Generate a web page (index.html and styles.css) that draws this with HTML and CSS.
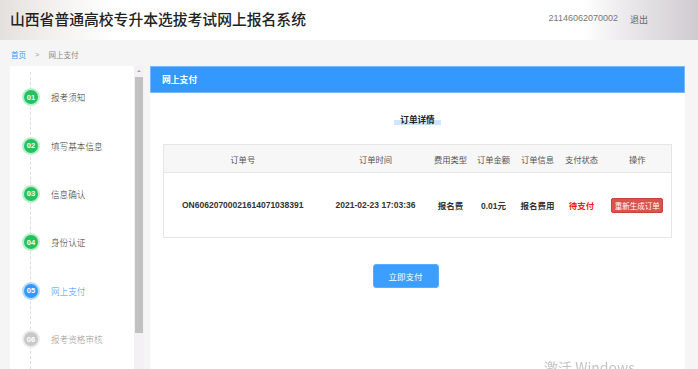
FILE: index.html
```html
<!DOCTYPE html>
<html lang="zh-CN">
<head>
<meta charset="utf-8">
<title>山西省普通高校专升本选拔考试网上报名系统</title>
<link rel="stylesheet" href="styles.css">
</head>
<body>
<header class="header">
  <h1 class="title">山西省普通高校专升本选拔考试网上报名系统</h1>
  <div class="user"><span class="uid">21146062070002</span><a class="logout">退出</a></div>
</header>
<nav class="crumb"><a class="crumb-home">首页</a><span class="crumb-sep">&gt;</span><span class="crumb-cur">网上支付</span></nav>
<div class="layout">
  <aside class="sidebar">
    <ul class="steps">
      <li class="step done"><span class="dot">01</span><span class="label">报考须知</span></li>
      <li class="step done"><span class="dot">02</span><span class="label">填写基本信息</span></li>
      <li class="step done"><span class="dot">03</span><span class="label">信息确认</span></li>
      <li class="step done"><span class="dot">04</span><span class="label">身份认证</span></li>
      <li class="step active"><span class="dot">05</span><span class="label">网上支付</span></li>
      <li class="step todo"><span class="dot">06</span><span class="label">报考资格审核</span></li>
    </ul>
    <div class="scrollbar"><span class="arrow"></span><span class="thumb"></span></div>
  </aside>
  <main class="main">
    <div class="panel-head">网上支付</div>
    <div class="panel-body">
      <h2 class="sub-title"><span>订单详情</span></h2>
      <table class="orders">
        <colgroup><col class="c1"><col class="c2"><col class="c3"><col class="c4"><col class="c5"><col class="c6"><col class="c7"></colgroup>
        <thead>
          <tr><th>订单号</th><th>订单时间</th><th>费用类型</th><th>订单金额</th><th>订单信息</th><th>支付状态</th><th>操作</th></tr>
        </thead>
        <tbody>
          <tr><td>ON60620700021614071038391</td><td>2021-02-23 17:03:36</td><td>报名费</td><td>0.01元</td><td>报名费用</td><td class="unpaid">待支付</td><td><button class="btn-regen">重新生成订单</button></td></tr>
        </tbody>
      </table>
      <div class="pay-wrap"><button class="btn-pay">立即支付</button></div>
    </div>
  </main>
</div>
<div class="watermark">激活 Windows</div>
</body>
</html>
```
FILE: styles.css
```css
* { box-sizing: border-box; }
html, body { margin: 0; padding: 0; }
body {
  background: #f5f5f5;
  font-family: "Liberation Sans", "Noto Sans CJK SC", sans-serif;
  color: #333;
  height: 369px;
  overflow: hidden;
}
.header {
  height: 40px;
  display: flex;
  align-items: center;
  justify-content: space-between;
  padding: 0 50px 4px 10px;
  background:
    linear-gradient(90deg, rgba(196,186,180,.45) 0, rgba(220,214,210,.3) 60px, rgba(255,255,255,0) 115px),
    linear-gradient(90deg, #fff 0, #fff 585px, #eeecee 620px, #cfcbd0 698px);
}
.title {
  margin: 0;
  font-size: 14.8px;
  font-weight: 500;
  color: #222;
  font-family: "Noto Sans CJK SC", sans-serif;
}
.user { font-size: 9px; color: #777; display: flex; gap: 12px; margin-top: 2px; }
.logout { color: #666; }
.crumb {
  height: 26px;
  display: flex;
  align-items: center;
  padding-left: 11px;
  padding-top: 2px;
  font-size: 7.5px;
  color: #888;
}
.crumb-home { color: #3399ff; }
.crumb-sep { margin: 0 9px 0 9px; color: #999; }
.layout {
  display: flex;
  gap: 6px;
  padding: 0 14px 0 10px;
  height: 303px;
}
.sidebar {
  width: 134px;
  background: #fff;
  display: flex;
  flex: none;
}
.steps {
  list-style: none;
  margin: 0;
  padding: 7px 0 0 0;
  flex: 1;
  position: relative;
}
.steps::before {
  content: "";
  position: absolute;
  left: 20px;
  top: 6px;
  bottom: 0;
  border-left: 1px dashed #dedede;
}
.step {
  height: 48.4px;
  display: flex;
  align-items: center;
  padding-left: 14px;
  position: relative;
}
.dot {
  width: 14px;
  height: 14px;
  border-radius: 50%;
  display: flex;
  align-items: center;
  justify-content: center;
  font-size: 7.5px;
  color: #fff;
  font-weight: bold;
}
.done .dot { background: #22c35e; box-shadow: 0 0 0 2px #b9efcd; }
.active .dot { background: #3399ff; box-shadow: 0 0 0 2px #b7dbff; }
.todo .dot { background: #c9c9c9; box-shadow: 0 0 0 2px #ececec; }
.label { margin-left: 13px; font-size: 8.6px; font-family: "Noto Sans CJK SC", sans-serif; font-weight: 300; }
.done .label { color: #333; }
.active .label { color: #3399ff; }
.todo .label { color: #999; }
.scrollbar {
  width: 10px;
  background: #f3f1f3;
  display: flex;
  flex-direction: column;
  align-items: center;
  padding-top: 4px;
}
.arrow {
  width: 0; height: 0;
  border-left: 2px solid transparent;
  border-right: 2px solid transparent;
  border-bottom: 2px solid #a3a3a3;
}
.thumb {
  margin-top: 5px;
  width: 8px;
  height: 256px;
  background: #c1c1c1;
}
.main {
  flex: 1;
  background: #fff;
}
.panel-head {
  height: 27px;
  background: #3399ff;
  border: 1px solid #74b8ff;
  color: #fff;
  font-size: 8.8px;
  font-weight: bold;
  display: flex;
  align-items: center;
  padding-left: 11px;
  font-family: "Noto Sans CJK SC", sans-serif;
}
.panel-body { padding: 20px 13px 0 13px; }
.sub-title {
  margin: 0;
  text-align: center;
  font-size: 8.6px;
  font-weight: bold;
  color: #222;
  font-family: "Noto Sans CJK SC", sans-serif;
  height: 31px;
}
.sub-title span {
  display: inline-block;
  padding: 0 6px;
  background: linear-gradient(transparent 62%, #cfe6fb 62%, #cfe6fb 100%);
  line-height: 12px;
}
.orders {
  width: 508px;
  table-layout: fixed;
  border-collapse: collapse;
  border: 1px solid #e6e6e6;
  font-size: 8.3px;
  font-family: "Liberation Sans", "Noto Sans CJK SC", sans-serif;
}
.c1 { width: 158px; } .c2 { width: 108px; } .c3 { width: 42px; } .c4 { width: 44px; }
.c5 { width: 44px; } .c6 { width: 44px; } .c7 { width: 68px; }
.orders th {
  height: 28px;
  background: #f7f7f7;
  border-bottom: 1px solid #e6e6e6;
  font-weight: normal;
  color: #555;
  padding: 0;
  text-align: center;
  white-space: nowrap;
}
.orders td {
  height: 65px;
  padding: 0;
  text-align: center;
  font-weight: bold;
  color: #333;
  white-space: nowrap;
  font-size: 8.5px;
}
.orders td.unpaid { color: #ff1a1a; }
.btn-regen {
  background: #d9534f;
  color: #fff;
  border: 1px solid #c9403c;
  border-radius: 2px;
  font-size: 7.5px;
  width: 52px;
  height: 15px;
  padding: 0;
  font-family: "Noto Sans CJK SC", sans-serif;
}
.pay-wrap { display: flex; justify-content: center; padding: 26px 24px 0 0; }
.btn-pay {
  width: 66px;
  height: 24px;
  background: #3c9eff;
  color: #fff;
  border: 1px solid #5aaeff;
  border-radius: 3px;
  font-size: 8.5px;
  padding: 0;
  font-family: "Noto Sans CJK SC", sans-serif;
}
.watermark {
  position: fixed;
  left: 544px;
  top: 358px;
  font-size: 14px;
  color: #c4c4c4;
  font-family: "Noto Sans CJK SC", sans-serif;
  line-height: 18px;
}
```
